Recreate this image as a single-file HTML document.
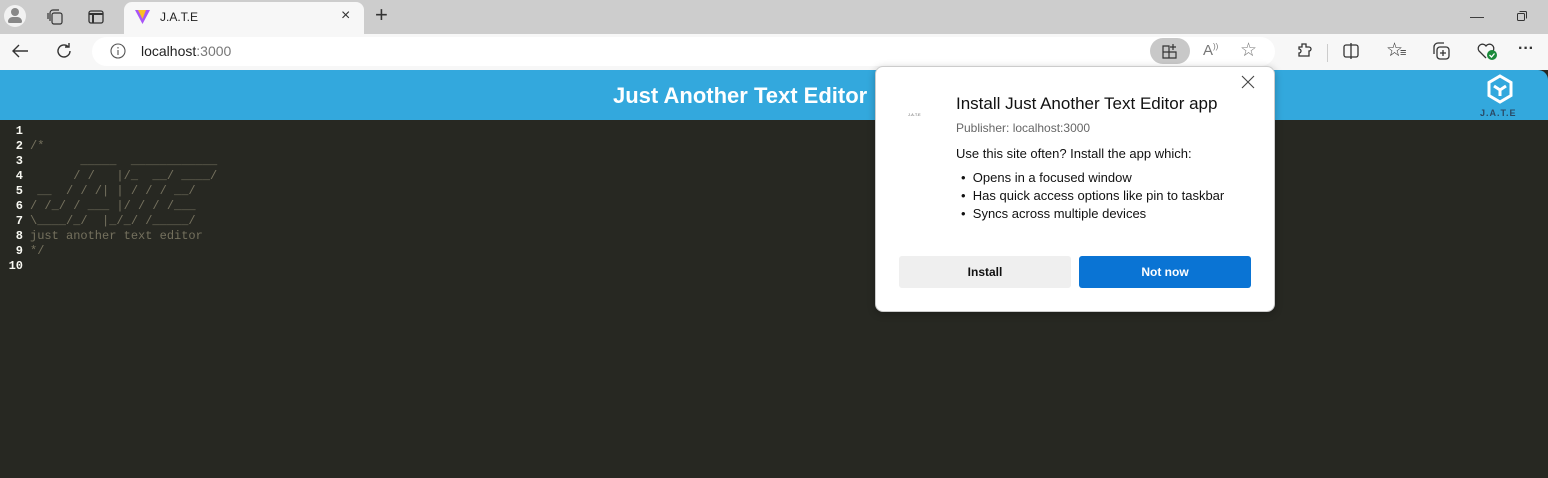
<!DOCTYPE html>
<html><head><meta charset="utf-8"><style>
*{margin:0;padding:0;box-sizing:border-box}
body{width:1548px;height:478px;overflow:hidden;background:#272822;font-family:"Liberation Sans",sans-serif;position:relative}
.abs{position:absolute}
#tabs{left:0;top:0;width:1548px;height:34px;background:#cdcdcd}
#tab{left:124px;top:2px;width:240px;height:32px;background:#f7f7f7;border-radius:8px 8px 0 0}
#bar{left:0;top:34px;width:1548px;height:36px;background:#f7f7f7}
#url{left:92px;top:37px;width:1183px;height:29px;background:#fff;border-radius:15px}
#hdr{left:0;top:70px;width:1548px;height:50px;background:#33a8dd;border-radius:0 10px 0 0}
#title{left:613px;top:83px;color:#fff;font-weight:bold;font-size:22px;white-space:nowrap}
pre{position:absolute;font-family:"Liberation Mono",monospace;font-size:12px;line-height:15px}
#gut{left:0;top:124px;width:23px;text-align:right;color:#f8f8f2;font-weight:bold}
#code{left:30px;top:124px;color:#75715e}
#pop{left:875px;top:66px;width:400px;height:246px;background:#fff;border-radius:8px;border:1px solid #ccc;box-shadow:0 2px 8px rgba(0,0,0,.25)}
.btn{position:absolute;top:189px;width:172px;height:32px;border-radius:3px;font-size:12px;font-weight:bold;text-align:center;line-height:32px}
svg{position:absolute}
</style></head><body>
<div class="abs" id="tabs"></div>
<div class="abs" id="tab"></div>
<div class="abs" style="left:4px;top:5px;width:22px;height:22px;border-radius:50%;background:#f2f2f2"></div>
<div class="abs" style="left:11px;top:8px;width:8px;height:8px;border-radius:50%;background:#888"></div>
<div class="abs" style="left:8px;top:17px;width:14px;height:6px;border-radius:6px 6px 2px 2px;background:#888"></div>
<svg style="left:46px;top:8px" width="18" height="18" viewBox="0 0 18 18" fill="none" stroke="#333" stroke-width="1.2"><rect x="6" y="5" width="10" height="11" rx="2"/><path d="M4 13V5a3 3 0 0 1 3-3h6M2 11V5"/></svg>
<svg style="left:88px;top:9px" width="16" height="16" viewBox="0 0 16 16" fill="none" stroke="#333" stroke-width="1.3"><rect x="1" y="2" width="14" height="12" rx="2"/><path d="M1 5h14M5 5v9" stroke-width="2"/></svg>
<svg style="left:134px;top:9px" width="17" height="16" viewBox="0 0 17 16"><path d="M1 1l7.5 14L16 1z" fill="#a855f7"/><path d="M4 1l4.5 9L12 1z" fill="#fbbf24"/></svg>
<div class="abs" style="left:160px;top:10px;font-size:12px;color:#222">J.A.T.E</div>
<div class="abs" style="left:341px;top:7px;font-size:16px;color:#333">×</div>
<div class="abs" style="left:375px;top:2px;font-size:22px;color:#333;font-weight:300">+</div>
<div class="abs" style="left:1470px;top:8px;font-size:14px;color:#333">—</div>
<svg style="left:1516px;top:10px" width="12" height="12" viewBox="0 0 12 12" fill="none" stroke="#333"><rect x="1.5" y="3.5" width="7" height="7" rx="1"/><path d="M3.5 1.5h6a1 1 0 0 1 1 1v6"/></svg>
<div class="abs" id="bar"></div>
<div class="abs" id="url"></div>
<svg style="left:10px;top:42px" width="20" height="18" viewBox="0 0 20 18" fill="none" stroke="#333" stroke-width="1.4"><path d="M18 9H3M9 3L3 9l6 6"/></svg>
<svg style="left:54px;top:41px" width="20" height="20" viewBox="0 0 20 20" fill="none" stroke="#333" stroke-width="1.4"><path d="M16 10a6 6 0 1 1-2-4.5M15 2v4h-4"/></svg>
<svg style="left:109px;top:42px" width="18" height="18" viewBox="0 0 18 18" fill="none" stroke="#555" stroke-width="1.1"><circle cx="9" cy="9" r="7"/><path d="M9 8v5M9 5v1.5"/></svg>
<div class="abs" style="left:141px;top:43px;font-size:14px;color:#222">localhost<span style="color:#777">:3000</span></div>
<div class="abs" style="left:1150px;top:38px;width:40px;height:26px;border-radius:13px;background:#c8c8c8"></div>
<svg style="left:1161px;top:42px" width="18" height="18" viewBox="0 0 18 18" fill="none" stroke="#333" stroke-width="1.2"><path d="M2 4h6v12H2zM8 10h7v6H8zM2 10h6M12 2v6M9 5h6"/></svg>
<div class="abs" style="left:1203px;top:42px;font-size:15px;color:#777">A<sup style="font-size:8px">))</sup></div>
<div class="abs" style="left:1240px;top:39px;font-size:19px;color:#777">☆</div>
<svg style="left:1295px;top:42px" width="18" height="18" viewBox="0 0 18 18" fill="none" stroke="#333" stroke-width="1.3"><path d="M7 2h4v3h3a2 2 0 0 1 0 4v5H4v-3a2 2 0 0 0 0-4V5h3z"/></svg>
<div class="abs" style="left:1327px;top:44px;width:1px;height:18px;background:#ccc"></div>
<svg style="left:1342px;top:42px" width="18" height="18" viewBox="0 0 18 18" fill="none" stroke="#333" stroke-width="1.3"><rect x="2" y="3" width="14" height="12" rx="2"/><path d="M9 1v16"/></svg>
<div class="abs" style="left:1386px;top:39px;font-size:19px;color:#333">☆<span style="font-size:11px;margin-left:-3px">≡</span></div>
<svg style="left:1431px;top:41px" width="20" height="20" viewBox="0 0 20 20" fill="none" stroke="#333" stroke-width="1.3"><rect x="6" y="6" width="12" height="12" rx="3"/><path d="M12 9v6M9 12h6M3 13V6a4 4 0 0 1 4-4h6"/></svg>
<svg style="left:1476px;top:41px" width="22" height="20" viewBox="0 0 22 20"><path d="M10 17L3 10a4 4 0 0 1 7-5 4 4 0 0 1 7 5" fill="none" stroke="#333" stroke-width="1.3"/><circle cx="16" cy="14" r="5" fill="#1a8a3a"/><path d="M13.5 14l2 2 3-3.5" stroke="#fff" fill="none" stroke-width="1.3"/></svg>
<div class="abs" style="left:1518px;top:40px;font-size:16px;color:#333;font-weight:bold">···</div>
<div class="abs" id="hdr"></div>
<div class="abs" id="title">Just Another Text Editor</div>
<svg style="left:1485px;top:74px" width="30" height="30" viewBox="0 0 30 30" fill="none" stroke="#fff" stroke-width="3"><path d="M15 2l11 6.5v13L15 28 4 21.5v-13z"/><path d="M9 12l6 4 6-4M15 16v6"/></svg>
<div class="abs" style="left:1480px;top:108px;font-size:9px;color:#2a4a66;letter-spacing:1px;font-weight:bold">J.A.T.E</div>
<pre id="gut">1
2
3
4
5
6
7
8
9
10</pre>
<pre id="code">

/*
       _____  ____________
      / /   |/_  __/ ____/
 __  / / /| | / / / __/
/ /_/ / ___ |/ / / /___
\____/_/  |_/_/ /_____/
just another text editor
*/</pre>
<div class="abs" id="pop">
<div class="abs" style="left:32px;top:45px;font-size:4px;color:#666">J.A.T.E</div>
<svg style="left:365px;top:8px" width="14" height="14" viewBox="0 0 14 14" stroke="#444" stroke-width="1.1"><path d="M1 1l12 12M13 1L1 13"/></svg>
<div class="abs" style="left:80px;top:27px;font-size:17px;color:#111">Install Just Another Text Editor app</div>
<div class="abs" style="left:80px;top:54px;font-size:12px;color:#666">Publisher: localhost:3000</div>
<div class="abs" style="left:80px;top:79px;font-size:13px;color:#111">Use this site often? Install the app which:</div>
<div class="abs" style="left:85px;top:102px;font-size:13px;color:#111;line-height:18px">•&nbsp; Opens in a focused window<br>•&nbsp; Has quick access options like pin to taskbar<br>•&nbsp; Syncs across multiple devices</div>
<div class="btn" style="left:23px;background:#efefef;color:#111">Install</div>
<div class="btn" style="left:203px;background:#0a74d4;color:#fff">Not now</div>
</div>
</body></html>
